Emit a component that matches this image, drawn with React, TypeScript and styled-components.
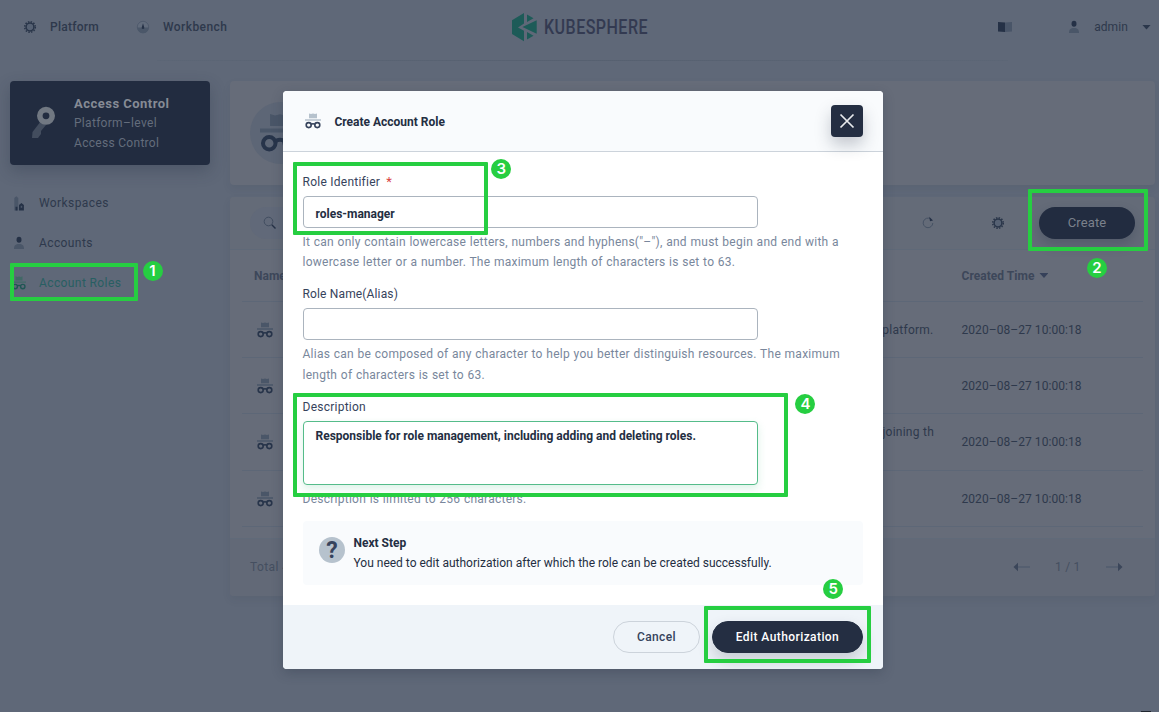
import React from "react";
import styled, { createGlobalStyle } from "styled-components";

const dark = "#242e42";
const ink = "#2e394c";
const ring = "#26ce41";

const GlobalStyle = createGlobalStyle`
  * { box-sizing: border-box; }
  body { margin: 0; background: #5f6878; font-family: Roboto, "Liberation Sans", sans-serif; font-size: 12px; line-height: 20px; }
  svg { display: block; flex: none; }
`;

const Screen = styled.div`
  position: relative;
  width: 1159px;
  height: 712px;
  overflow: hidden;
  background: #5f6878;
  color: ${ink};
`;

const Text = styled.span<{ $size?: number; $weight?: number; $color?: string; $track?: number }>`
  display: block;
  white-space: nowrap;
  font-size: ${(p) => p.$size ?? 12}px;
  font-weight: ${(p) => p.$weight ?? 400};
  color: ${(p) => p.$color ?? "inherit"};
  letter-spacing: ${(p) => p.$track ?? 0}px;
`;
const Hint = styled.p<{ $gap?: number }>`
  margin: ${(p) => p.$gap ?? 0}px 0 0;
  white-space: nowrap;
  letter-spacing: 0.255px;
  word-spacing: 0.36px;
`;

/* ---------- header ---------- */

const Header = styled.header`
  display: grid;
  grid-template-columns: 488px 150px 1fr;
  align-items: center;
  height: 60px;
  padding: 0 8px 6px 23px;
`;
const Divider = styled.div`
  height: 1px;
  margin: 0 151px 0 157px;
  background: linear-gradient(to right, #5c6676, #566070 50%, #5c6676);
`;
const Nav = styled.nav`
  display: flex;
  gap: 37px;
`;
const NavItem = styled.div`
  display: flex;
  align-items: center;
  gap: 13px;
`;
const Logo = styled.div`
  display: flex;
  align-items: center;
  gap: 5.6px;
`;
const Wordmark = styled.span`
  width: 130px;
  font-size: 21px;
  font-weight: 500;
  line-height: 30px;
  letter-spacing: 0.6px;
  white-space: nowrap;
  color: #333a51;
  transform: scaleX(0.764);
  transform-origin: left center;
`;
const UserArea = styled.div`
  display: flex;
  align-items: center;
  justify-content: flex-end;
`;
const UserButton = styled.div`
  display: flex;
  align-items: center;
  gap: 13px;
  margin-left: 55px;
`;
const Caret = styled.i<{ $color: string; $gap: number }>`
  width: 9px;
  height: 5px;
  margin-left: ${(p) => p.$gap}px;
  background: ${(p) => p.$color};
  clip-path: polygon(0 0, 100% 0, 50% 100%);
`;

/* ---------- page body ---------- */

const Body = styled.div`
  display: flex;
  gap: 20px;
  padding: 20px 4px 0 10px;
`;
const Sidebar = styled.aside`
  width: 200px;
`;
const AccessCard = styled.div`
  display: flex;
  height: 84px;
  padding: 13px 20px 0 21px;
  border-radius: 4px;
  background: #222c40;
  box-shadow: 0 6px 16px rgba(36, 46, 66, 0.3);
`;
const AccessText = styled.div`
  margin-left: 19px;
  line-height: 19.8px;
  color: #646d7c;
`;
const Menu = styled.div`
  display: flex;
  flex-direction: column;
  gap: 20px;
  padding: 28px 0 0 2px;
`;
const MenuItem = styled.div<{ $active?: boolean }>`
  display: flex;
  align-items: center;
  gap: 13px;
  color: ${(p) => (p.$active ? "#285f62" : ink)};
`;
const Main = styled.main`
  display: flex;
  flex: 1;
  flex-direction: column;
  gap: 12px;
`;
const Card = styled.section`
  border-radius: 4px;
  background: #666c79;
  box-shadow: 0 4px 8px rgba(36, 46, 66, 0.08);
`;
const Banner = styled(Card)`
  height: 104px;
  padding: 21px 20px;
`;
const BannerIcon = styled.div`
  display: flex;
  align-items: center;
  justify-content: center;
  width: 62px;
  height: 62px;
  padding-right: 2px;
  border-radius: 50%;
  background: #5d6676;
`;
const TableCard = styled(Card)`
  height: 399px;
  overflow: hidden;
`;
const Toolbar = styled.div`
  display: flex;
  align-items: center;
  height: 53px;
  padding: 0 20px;
  background: #646b78;
  border-bottom: 1px solid #5f6978;
`;
const Search = styled.div`
  display: flex;
  align-items: center;
  flex: 1;
  height: 32px;
  margin-right: 41px;
  padding-left: 13px;
  border-radius: 16px;
  background: #616979;
`;
const Tools = styled.div`
  display: flex;
  align-items: center;
  gap: 56px;
`;
const CreateButton = styled.div`
  display: flex;
  align-items: center;
  justify-content: center;
  width: 96px;
  height: 32px;
  margin-left: 34px;
  border-radius: 16px;
  background: #222c40;
  color: #7b818c;
  box-shadow: 0 6px 12px rgba(36, 46, 66, 0.25);
`;
const Row = styled.div<{ $h: number }>`
  display: grid;
  grid-template-columns: 390px 317.5px 1fr;
  align-items: center;
  height: ${(p) => p.$h}px;
  margin: 0 12px;
  padding-left: 12px;
  border-bottom: 1px solid #5d6777;
`;
const Desc = styled.div<{ $lift?: boolean }>`
  display: flex;
  justify-content: flex-end;
  padding: 0 ${(p) => (p.$lift ? "27.5px 20px" : "28px 0")} 0;
`;
const TimeHead = styled.div`
  display: flex;
  align-items: center;
`;
const IconCell = styled.div`
  padding-left: 3px;
`;
const TableFooter = styled.div`
  display: flex;
  align-items: center;
  justify-content: space-between;
  height: 60px;
  margin-top: 11px;
  padding: 0 32px 4px 20px;
  border-top: 1px solid #606a79;
  background: #626977;
  color: #454f60;
`;
const Pager = styled.div`
  display: flex;
  align-items: center;
  gap: 25.5px;
`;

/* ---------- dialog ---------- */

const Mask = styled.div`
  position: absolute;
  inset: 0;
  display: flex;
  justify-content: center;
  align-items: flex-start;
  padding: 91px 0 0 7px;
`;
const Dialog = styled.div`
  width: 600px;
  height: 578px;
  overflow: hidden;
  border-radius: 4px;
  background: #fff;
  box-shadow: 0 4px 12px rgba(36, 46, 66, 0.28);
`;
const DialogHead = styled.div`
  display: flex;
  align-items: center;
  height: 61px;
  padding: 0 20px 0 22px;
  background: #f9fbfd;
  border-bottom: 1px solid #ccd3db;
`;
const DialogTitle = styled.div`
  flex: 1;
  margin-left: 13.4px;
  padding-top: 2px;
  color: ${dark};
`;
const CloseButton = styled.div`
  display: flex;
  align-items: center;
  justify-content: center;
  width: 32px;
  height: 32px;
  border-radius: 4px;
  background: ${dark};
  box-shadow: 0 8px 16px rgba(36, 46, 66, 0.25);
`;
const Form = styled.div`
  display: flex;
  flex-direction: column;
  height: 453px;
  padding: 20px 20px 20px 19.5px;
`;
const Field = styled.div<{ $h: number }>`
  height: ${(p) => p.$h}px;
  color: #79879c;
`;
const Label = styled.div`
  display: flex;
  gap: 6px;
  margin-bottom: 4px;
  color: #36435c;
`;
const Input = styled.div<{ $area?: boolean }>`
  width: 455px;
  height: ${(p) => (p.$area ? 64 : 32)}px;
  margin: 0 0 4px 0.5px;
  padding: ${(p) => (p.$area ? 4 : 7)}px 11.5px;
  border: 1px solid ${(p) => (p.$area ? "#55bc8a" : "#abb4be")};
  border-radius: 4px;
  background: #fff;
  color: ${dark};
  box-shadow: ${(p) => (p.$area ? "0 4px 8px rgba(85, 188, 138, 0.2)" : "none")};
`;
const NextStep = styled.div`
  display: flex;
  gap: 8px;
  height: 64px;
  margin-left: 0.5px;
  padding: 12px 16px;
  border-radius: 4px;
  background: #f9fbfd;
  color: ${dark};
`;
const Question = styled.div`
  display: flex;
  align-items: center;
  justify-content: center;
  width: 26px;
  height: 26px;
  margin: 4px 0.5px 0 0;
  padding-top: 2px;
  border-radius: 50%;
  background: #b6c2cd;
`;
const DialogFoot = styled.div`
  display: flex;
  justify-content: flex-end;
  gap: 12px;
  height: 64px;
  padding: 16px 20px;
  background: #eff4f9;
`;
const Button = styled.div<{ $primary?: boolean }>`
  display: flex;
  align-items: center;
  justify-content: center;
  width: ${(p) => (p.$primary ? 151 : 87)}px;
  height: 32px;
  border: 1px solid ${(p) => (p.$primary ? dark : "#ccd3db")};
  border-radius: 16px;
  background: ${(p) => (p.$primary ? dark : "transparent")};
  color: ${(p) => (p.$primary ? "#fff" : "#36435c")};
  box-shadow: ${(p) => (p.$primary ? "0 8px 16px rgba(36, 46, 66, 0.2)" : "none")};
`;

/* ---------- step annotations ---------- */

const Outline = styled.div<{ $x: number; $y: number; $w: number; $h: number }>`
  position: absolute;
  left: ${(p) => p.$x}px;
  top: ${(p) => p.$y}px;
  width: ${(p) => p.$w}px;
  height: ${(p) => p.$h}px;
  border: 4px solid ${ring};
  border-radius: 1px;
`;
const Badge = styled.div<{ $x: number; $y: number }>`
  position: absolute;
  left: ${(p) => p.$x - 10}px;
  top: ${(p) => p.$y - 10}px;
  width: 20px;
  height: 20px;
  border-radius: 50%;
  background: ${ring};
  color: #fff;
  font: 600 15px/20px Inter, sans-serif;
  text-align: center;
`;
const HelpTab = styled.div`
  position: absolute;
  right: 8px;
  bottom: 0;
  width: 10px;
  height: 1px;
  background: #20262f;
`;

/* ---------- icons ---------- */

const RoleIcon = ({ size = 16, line = "#27344a", fill = "#4a5668" }) => (
  <svg width={size} height={size} viewBox="0 0 16 16">
    <path d="M4 .4l2 .6 2-.5 2 .5 2-.6V5.200H4zM0 6.200h16v1.600H0z" fill={fill} />
    <g fill="none" stroke={line} strokeWidth="1.600">
      <circle cx="3.700" cy="12.100" r="2.500" />
      <circle cx="12.300" cy="12.100" r="2.500" />
      <path d="M6.100 11.600c.8-1.200 3-1.200 3.800 0" />
    </g>
  </svg>
);
const Gear = () => (
  <svg width="14" height="14" viewBox="0 0 14 14">
    <circle cx="7" cy="7" r="5.300" fill="none" stroke="#293549" strokeWidth="1.500" strokeDasharray="1.500 1.275" />
    <circle cx="7" cy="7" r="3.900" fill="#566173" stroke="#293549" strokeWidth="1.500" />
  </svg>
);
const Dash = () => (
  <svg width="14" height="14" viewBox="0 0 14 14">
    <circle cx="7" cy="7" r="5.700" fill="#626c7c" stroke="#4b5769" strokeWidth=".8" />
    <path d="M1.300 7.600h11.400A5.700 5.700 0 0 1 1.300 7.600z" fill="#4b5769" />
    <path d="M7 3.300l1.200 3.900a1.300 1.300 0 1 1-2.400 0z" fill="#253146" />
  </svg>
);
const Person = () => (
  <svg width="14" height="14" viewBox="0 0 14 14">
    <path d="M2 13c0-3.600 1.400-5 5-5s5 1.400 5 5z" fill="#4a5668" />
    <ellipse cx="7" cy="3.800" rx="2.500" ry="3" fill="#253146" />
  </svg>
);
const Workspace = () => (
  <svg width="14" height="16" viewBox="0 0 14 16">
    <path d="M2.300 15.500V3l2-1.800L6.300 3v12.500z" fill="#4a5668" />
    <path d="M3.500 11.800h2v3.700h-2zM7 15.500V10l2.400-1.900 2.500 1.900v5.500z" fill="#253146" />
    <path d="M8.700 10.800h1.500v2H8.700z" fill="#4a5668" />
  </svg>
);
const KeyIcon = styled.svg`
  margin-top: 11px;
`;
const Key = () => (
  <KeyIcon width="24" height="34" viewBox="0 0 24 34">
    <path d="M10 16l5 4-5 6v3l-3 4H1l.5-6z" fill="#434d5e" />
    <circle cx="15" cy="10.800" r="6.200" fill="none" stroke="#717882" strokeWidth="5.600" />
  </KeyIcon>
);
const Arrow = ({ flip = false }) => (
  <svg width="17" height="10" viewBox="0 0 17 10" transform={flip ? "scale(-1 1)" : undefined}>
    <path d="M4 5h13" stroke="#525d6e" strokeWidth="1.500" />
    <path d="M.5 5L5 .7v8.600z" fill="#3b465a" />
  </svg>
);

const Rows = [
  { h: 56, text: "Manage all the accounts of the platform." },
  { h: 56, text: "" },
  { h: 57, text: "Accounts before joining th", lift: true },
  { h: 56, text: "" },
];

export default function App() {
  return (
    <Screen>
      <GlobalStyle />
      <Header>
        <Nav>
          <NavItem><Gear /><Text $weight={500} $track={0.26}>Platform</Text></NavItem>
          <NavItem><Dash /><Text $weight={500} $track={0.42}>Workbench</Text></NavItem>
        </Nav>
        <Logo>
          <svg width="27" height="30" viewBox="0 0 27 30">
            <g fill="#1d5b58">
              <path d="M1 8.300L13 1v10.400l-6 4 6 3.300V29.200L1 22z" />
              <path d="M16 2.600l6.500 3.700-6.500 3.700zM25.700 8.300v13.400L11.500 15zM16 20l6.500 3.700-6.500 3.800z" />
            </g>
          </svg>
          <Wordmark>KUBESPHERE</Wordmark>
        </Logo>
        <UserArea>
          <svg width="14" height="12" viewBox="0 0 14 12">
            <path d="M0 1l7 .6V11l-7-.6z" fill="#253146" />
            <path d="M7 1.600L14 1v9.400L7 11z" fill="#495568" />
          </svg>
          <UserButton><Person /><Text $track={0.1}>admin</Text></UserButton>
          <Caret $color="#2b374b" $gap={14} />
        </UserArea>
      </Header>
      <Divider />
      <Body>
        <Sidebar>
          <AccessCard>
            <Key />
            <AccessText>
              <Text $size={13} $weight={700} $color="#868b95" $track={0.48}>Access Control</Text>
              <Text $track={0.3}>Platform–level</Text>
              <Text $track={0.3}>Access Control</Text>
            </AccessText>
          </AccessCard>
          <Menu>
            <MenuItem><Workspace /><Text $track={0.4}>Workspaces</Text></MenuItem>
            <MenuItem><Person /><Text $track={0.4}>Accounts</Text></MenuItem>
            <MenuItem $active><RoleIcon size={14} line="#205654" fill="#416866" /><Text $track={0.4}>Account Roles</Text></MenuItem>
          </Menu>
        </Sidebar>
        <Main>
          <Banner><BannerIcon><RoleIcon size={40} /></BannerIcon></Banner>
          <TableCard>
            <Toolbar>
              <Search>
                <svg width="14" height="14" viewBox="0 0 14 14" fill="none">
                  <circle cx="5.500" cy="5.500" r="4.300" stroke="#414d60" />
                  <path d="M8.800 8.800l3.700 3.700" stroke="#253146" strokeWidth="1.400" />
                </svg>
              </Search>
              <Tools>
                <svg width="14" height="14" viewBox="0 0 14 14" fill="none">
                  <path d="M9.500 2.800A4.800 4.800 0 1 0 11.800 7" stroke="#465264" />
                  <path d="M8.300 .8l3.700 3.600-3 .9z" fill="#253146" />
                </svg>
                <Gear />
              </Tools>
              <CreateButton><Text $size={13} $track={0.1}>Create</Text></CreateButton>
            </Toolbar>
            <Row $h={52}>
              <Text $weight={700} $color="#3d475a">Name</Text>
              <span />
              <TimeHead><Text $weight={700} $color="#3d475a" $track={0.04}>Created Time</Text><Caret $color="#36415a" $gap={5} /></TimeHead>
            </Row>
            {Rows.map((r, i) => (
              <Row $h={r.h} key={i}>
                <IconCell><RoleIcon /></IconCell>
                <Desc $lift={r.lift}><Text $track={0.25}>{r.text}</Text></Desc>
                <Text $track={0.06}>2020–08–27 10:00:18</Text>
              </Row>
            ))}
            <TableFooter>
              <Text $track={0.4}>Total 4</Text>
              <Pager><Arrow /><Text $track={0.2}>1 / 1</Text><Arrow flip /></Pager>
            </TableFooter>
          </TableCard>
        </Main>
      </Body>
      <HelpTab />

      <Mask>
        <Dialog>
          <DialogHead>
            <RoleIcon line="#36435c" fill="#b6c2cd" />
            <DialogTitle><Text $weight={700}>Create Account Role</Text></DialogTitle>
            <CloseButton>
              <svg width="16" height="16" viewBox="0 0 16 16"><path d="M1.500 1.500l13 13M14.500 1.500l-13 13" stroke="#e8eaed" strokeWidth="1.700" /></svg>
            </CloseButton>
          </DialogHead>
          <Form>
            <Field $h={112}>
              <Label><Text $track={0.25}>Role Identifier</Text><Text $color="#d9423f" $size={13}>*</Text></Label>
              <Input><Text $weight={700}>roles-manager</Text></Input>
              <Hint>It can only contain lowercase letters, numbers and hyphens("–"), and must begin and end with a</Hint>
              <Hint>lowercase letter or a number. The maximum length of characters is set to 63.</Hint>
            </Field>
            <Field $h={113}>
              <Label><Text $track={0.15}>Role Name(Alias)</Text></Label>
              <Input />
              <Hint>Alias can be composed of any character to help you better distinguish resources. The maximum</Hint>
              <Hint $gap={1}>length of characters is set to 63.</Hint>
            </Field>
            <Field $h={124}>
              <Label><Text $track={0.25}>Description</Text></Label>
              <Input $area><Text $weight={700}>Responsible for role management, including adding and deleting roles.</Text></Input>
              <Hint>Description is limited to 256 characters.</Hint>
            </Field>
            <NextStep>
              <Question><Text $size={23} $weight={700} $color="#36435c">?</Text></Question>
              <div>
                <Text $weight={700}>Next Step</Text>
                <Text>You need to edit authorization after which the role can be created successfully.</Text>
              </div>
            </NextStep>
          </Form>
          <DialogFoot>
            <Button><Text $weight={500} $track={0.4}>Cancel</Text></Button>
            <Button $primary><Text $weight={500} $track={0.42}>Edit Authorization</Text></Button>
          </DialogFoot>
        </Dialog>
      </Mask>

      <Outline $x={10} $y={263} $w={128} $h={38} />
      <Outline $x={1028} $y={189} $w={120} $h={62} />
      <Outline $x={293} $y={162} $w={195} $h={73} />
      <Outline $x={293} $y={393} $w={495} $h={104} />
      <Outline $x={704} $y={606} $w={167} $h={57} />
      <Badge $x={152.5} $y={271}>1</Badge>
      <Badge $x={1097} $y={268}>2</Badge>
      <Badge $x={501.4} $y={169}>3</Badge>
      <Badge $x={805.4} $y={404.4}>4</Badge>
      <Badge $x={833.3} $y={589}>5</Badge>
    </Screen>
  );
}
